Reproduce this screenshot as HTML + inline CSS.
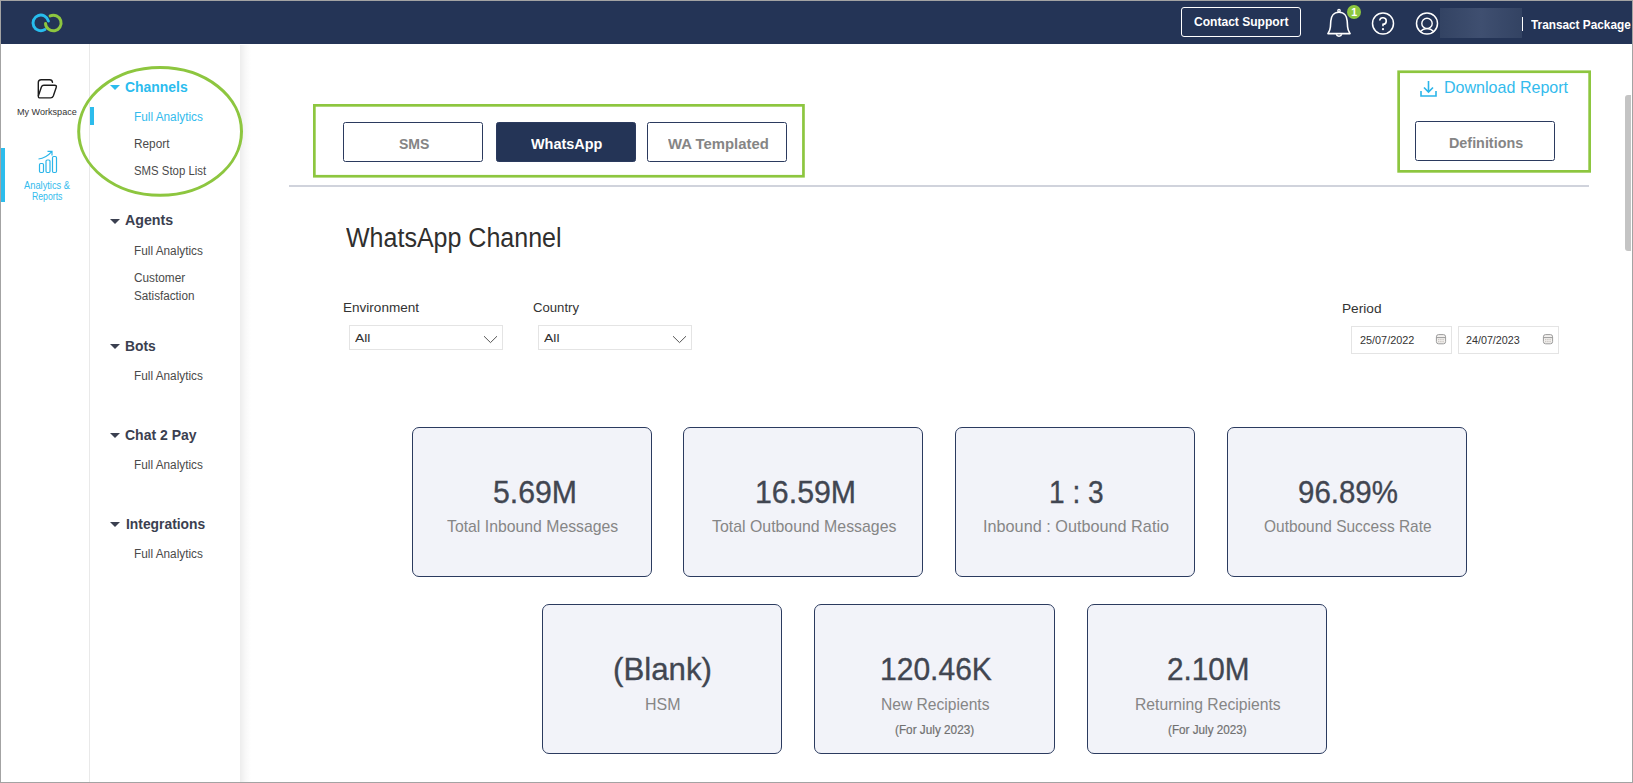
<!DOCTYPE html>
<html>
<head>
<meta charset="utf-8">
<title>Analytics</title>
<style>
*{box-sizing:border-box;margin:0;padding:0}
html,body{width:1633px;height:783px;overflow:hidden;background:#fff}
body{font-family:"Liberation Sans",sans-serif;position:relative;color:#333}
.abs,.t{position:absolute}
.t{white-space:nowrap;transform-origin:0 50%;line-height:1}
#frame{position:absolute;left:0;top:0;width:1633px;height:783px;border:1px solid #a3a3a3;z-index:50;pointer-events:none}
#topbar{position:absolute;left:1px;top:1px;width:1631px;height:43px;background:#243456}
#side1{position:absolute;left:1px;top:44px;width:88px;height:738px;background:#fff}
#div1{position:absolute;left:89px;top:44px;width:1px;height:738px;background:#e9e9e9}
#side2{position:absolute;left:90px;top:44px;width:150px;height:738px;background:#fff}
#shadow{position:absolute;left:240px;top:45px;width:11px;height:737px;background:linear-gradient(to right,#ededed,#f8f8f8 50%,#fff)}
.h{font-weight:bold;font-size:15px;color:#3b4050}
.i{font-size:12px;color:#4a4a4a}
.cy{color:#33bbed}
.cy2{color:#2bbcee}
.tri{position:absolute;width:0;height:0;border-left:5px solid transparent;border-right:5px solid transparent;border-top:5.5px solid #3b4050}
.btn{position:absolute;height:40px;width:140px;border:1px solid #2b3a5e;border-radius:2.5px;background:#fff}
.btn.on{background:#243456}
.card{position:absolute;width:240px;height:150px;background:#f2f3f9;border:1px solid #2b3b5f;border-radius:7px}
.num{font-size:32px;color:#414651;-webkit-text-stroke:0.35px #414651}
.lab{font-size:17px;color:#868686}
.sub{font-size:12.5px;color:#707070;-webkit-text-stroke:0.2px #707070}
.dd{position:absolute;height:25px;width:154px;border:1px solid #e4e4e4;background:#fff}
.date{position:absolute;height:28px;width:101px;border:1px solid #e4e4e4;background:#fff}
</style>
</head>
<body>
<div id="topbar"></div>
<div id="side1"></div>
<div id="div1"></div>
<div id="side2"></div>
<div id="shadow"></div>

<!-- TOPBAR -->
<svg class="abs" style="left:28px;top:10px" width="40" height="26" viewBox="28 10 40 26">
  <path d="M48.37 21.01 A7.8 7.8 0 1 0 44.93 29.51" fill="none" stroke="#27bdee" stroke-width="3" stroke-linecap="round"/>
  <path d="M45.52 23.54 A7.8 7.8 0 1 0 50.13 15.87" fill="none" stroke="#8dc63f" stroke-width="3" stroke-linecap="round"/>
</svg>
<div class="abs" style="left:1181px;top:7px;width:120px;height:30px;border:1px solid #fff;border-radius:3px"></div>
<span class="t" id="cs" style="left:1194.22px;top:15px;font-size:13px;font-weight:bold;color:#fff;transform:scaleX(0.9270)">Contact Support</span>
<svg class="abs" style="left:1322px;top:4px" width="44" height="38" viewBox="1322 4 44 38">
  <path d="M1339 12.3 C1333.5 12.3 1331 16.5 1330.8 21 L1330.4 27 C1330.2 30 1328.9 31.8 1327.9 33.6 L1350.1 33.6 C1349.1 31.8 1347.8 30 1347.6 27 L1347.2 21 C1347 16.5 1344.5 12.3 1339 12.3 Z" fill="none" stroke="#fff" stroke-width="1.6" stroke-linejoin="round"/>
  <circle cx="1339" cy="10.7" r="1.2" fill="none" stroke="#fff" stroke-width="1.3"/>
  <path d="M1336.3 34.3 A2.8 2.6 0 0 0 1341.7 34.3" fill="none" stroke="#fff" stroke-width="1.5"/>
  <circle cx="1354" cy="12" r="7" fill="#8dc63f"/>
</svg>
<span class="t" id="bd" style="left:1351.3px;top:6.5px;font-size:10.5px;font-weight:bold;color:#fff">1</span>
<svg class="abs" style="left:1368px;top:10px" width="74" height="28" viewBox="1368 10 74 28">
  <circle cx="1383" cy="23.5" r="10.5" fill="none" stroke="#fff" stroke-width="1.5"/>
  <path d="M1379.700 20.500 A3.300 3.300 0 1 1 1383 24.300 L1383 26.200" fill="none" stroke="#fff" stroke-width="1.600"/>
  <circle cx="1383" cy="29.200" r="1.100" fill="#fff"/>
  <circle cx="1427" cy="23.5" r="10.5" fill="none" stroke="#fff" stroke-width="1.5"/>
  <circle cx="1427" cy="23.4" r="5.2" fill="none" stroke="#fff" stroke-width="1.4"/>
  <path d="M1419.9 31.7 Q1427 25.2 1434.1 31.7" fill="none" stroke="#fff" stroke-width="1.4"/>
</svg>
<div class="abs" style="left:1440px;top:8px;width:82px;height:30px;background:linear-gradient(to right,#334363,#3f4f70 50%,#334363)"></div>
<div class="abs" style="left:1522px;top:17px;width:1px;height:14px;background:#fff"></div>
<span class="t" id="tp" style="left:1531.02px;top:18px;font-size:13px;font-weight:bold;color:#fff;transform:scaleX(0.9080)">Transact Package</span>

<!-- SIDEBAR 1 -->
<svg class="abs" style="left:34px;top:76px" width="28" height="26" viewBox="34 76 28 26">
  <path d="M38.3 95.5 L38.3 82.6 Q38.3 79.7 41.2 79.7 L49.6 79.7 Q52.2 79.7 52.5 82.4" fill="none" stroke="#1c1c1c" stroke-width="1.4" stroke-linecap="round"/>
  <path d="M43.9 85.2 L54.5 85.2 Q57 85.2 56.2 87.5 L53.3 96 Q52.6 97.9 50.6 97.9 L40.3 97.9 Q37.7 97.9 38.5 95.6 L41.4 87 Q42 85.2 43.9 85.2 Z" fill="none" stroke="#1c1c1c" stroke-width="1.4" stroke-linejoin="round"/>
</svg>
<span class="t" id="mw" style="left:17.04px;top:107px;font-size:9.5px;color:#333;transform:scaleX(0.9542)">My Workspace</span>
<div class="abs" style="left:1px;top:148px;width:4px;height:54px;background:#2dbcec"></div>
<svg class="abs" style="left:34px;top:148px" width="28" height="28" viewBox="34 148 28 28">
  <rect x="39.500" y="163.500" width="4" height="9" rx="1.200" fill="none" stroke="#2bb5e9" stroke-width="1.200"/>
  <rect x="46" y="160" width="4" height="12.500" rx="1.200" fill="none" stroke="#2bb5e9" stroke-width="1.200"/>
  <rect x="52.500" y="156.500" width="4" height="16" rx="1.200" fill="none" stroke="#2bb5e9" stroke-width="1.200"/>
  <path d="M38.500 159 Q46 158 51.500 151.800 M47.500 151.300 L52 151.300 L52 155.500" fill="none" stroke="#2bb5e9" stroke-width="1.200"/>
</svg>
<span class="t cy" id="ar1" style="left:24.47px;top:180.5px;font-size:10.3px;transform:scaleX(0.9039)">Analytics &amp;</span>
<span class="t cy" id="ar2" style="left:32.11px;top:191.5px;font-size:10.3px;transform:scaleX(0.8451)">Reports</span>

<!-- SIDEBAR 2 -->
<svg class="abs" style="left:70px;top:60px" width="180" height="142" viewBox="70 60 180 142">
  <ellipse cx="160.1" cy="131.4" rx="81.4" ry="63.9" fill="none" stroke="#8dc63f" stroke-width="3"/>
</svg>
<div class="abs" style="left:90px;top:107px;width:4px;height:18px;background:#2dbcec"></div>
<div class="tri" style="left:110px;top:85px;border-top-color:#2bbcee"></div>
<span id="ch" class="t h cy2" style="left:125.36px;top:79px;transform:scaleX(0.9277)">Channels</span>
<span id="fa1" class="t i cy" style="left:133.91px;top:111px;transform:scaleX(0.9842)">Full Analytics</span>
<span id="rp" class="t i" style="left:133.88px;top:138px;transform:scaleX(0.9833)">Report</span>
<span id="ssl" class="t i" style="left:134.27px;top:165px;transform:scaleX(0.9485)">SMS Stop List</span>

<div class="tri" style="left:110px;top:219px"></div>
<span id="ag" class="t h" style="left:124.79px;top:212.3px;transform:scaleX(0.9482)">Agents</span>
<span id="fa2" class="t i" style="left:133.91px;top:245px;transform:scaleX(0.9842)">Full Analytics</span>
<span id="cu" class="t i" style="left:133.95px;top:272px;transform:scaleX(0.9843)">Customer</span>
<span id="sa" class="t i" style="left:133.70px;top:290px;transform:scaleX(0.9746)">Satisfaction</span>

<div class="tri" style="left:110px;top:344px"></div>
<span id="bo" class="t h" style="left:125.32px;top:338px;transform:scaleX(0.9225)">Bots</span>
<span id="fa3" class="t i" style="left:133.91px;top:370px;transform:scaleX(0.9842)">Full Analytics</span>

<div class="tri" style="left:110px;top:433px"></div>
<span id="c2p" class="t h" style="left:125.34px;top:427px;transform:scaleX(0.9338)">Chat 2 Pay</span>
<span id="fa4" class="t i" style="left:133.91px;top:459px;transform:scaleX(0.9842)">Full Analytics</span>

<div class="tri" style="left:110px;top:522px"></div>
<span id="ig" class="t h" style="left:125.81px;top:516px;transform:scaleX(0.9227)">Integrations</span>
<span id="fa5" class="t i" style="left:133.91px;top:548px;transform:scaleX(0.9842)">Full Analytics</span>

<!-- MAIN -->
<svg class="abs" style="left:300px;top:95px" width="520" height="95" viewBox="300 95 520 95"><rect x="314.35" y="105.35" width="489.1" height="70.9" fill="none" stroke="#8dc63f" stroke-width="2.7"/></svg>
<div class="btn" style="left:343px;top:122px"></div>
<div class="btn on" style="left:496px;top:122px"></div>
<div class="btn" style="left:647px;top:122px"></div>
<span class="t" id="b1" style="left:398.61px;top:136px;font-size:15px;font-weight:bold;color:#858585;transform:scaleX(0.9367)">SMS</span>
<span class="t" id="b2" style="left:531.45px;top:136px;font-size:15px;font-weight:bold;color:#fff;transform:scaleX(0.9622)">WhatsApp</span>
<span class="t" id="b3" style="left:667.90px;top:136px;font-size:15px;font-weight:bold;color:#858585;transform:scaleX(0.9909)">WA Templated</span>
<div class="abs" style="left:289px;top:185px;width:1300px;height:2px;background:#d0d3dc"></div>

<svg class="abs" style="left:1390px;top:60px" width="210" height="120" viewBox="1390 60 210 120"><rect x="1398.65" y="71.75" width="191" height="99.6" fill="none" stroke="#8dc63f" stroke-width="2.7"/></svg>
<svg class="abs" style="left:1418px;top:78px" width="22" height="22" viewBox="1418 78 22 22">
  <path d="M1428.500 81 L1428.500 92 M1424 87.500 L1428.500 92 L1433 87.500" fill="none" stroke="#2bb5e9" stroke-width="1.600"/>
  <path d="M1421 91 L1421 96 L1436 96 L1436 91" fill="none" stroke="#2bb5e9" stroke-width="1.600"/>
</svg>
<span class="t cy" id="dr" style="left:1443.91px;top:79px;font-size:17px;transform:scaleX(0.9446)">Download Report</span>
<div class="btn" style="left:1415px;top:121px"></div>
<span class="t" id="b4" style="left:1448.83px;top:135px;font-size:15px;font-weight:bold;color:#858585;transform:scaleX(0.9568)">Definitions</span>

<span class="t" id="title" style="left:346.12px;top:225px;font-size:27px;color:#302f2e;transform:scaleX(0.9264)">WhatsApp Channel</span>

<span class="t" id="l1" style="left:342.99px;top:301px;font-size:13px;color:#333;transform:scaleX(1.0424)">Environment</span>
<div class="dd" style="left:349px;top:325px"></div>
<span id="all1" class="t" style="left:354.85px;top:333px;font-size:11px;color:#333;transform:scaleX(1.2637)">All</span>
<span class="t" id="l2" style="left:533.11px;top:301px;font-size:13px;color:#333;transform:scaleX(1.0108)">Country</span>
<div class="dd" style="left:538px;top:325px"></div>
<span id="all2" class="t" style="left:543.70px;top:333px;font-size:11px;color:#333;transform:scaleX(1.2716)">All</span>
<svg class="abs" style="left:480px;top:330px" width="220" height="16" viewBox="480 330 220 16">
  <path d="M484 336.2 L490.5 342.6 L497 336.2" fill="none" stroke="#555" stroke-width="1"/>
  <path d="M673 336.2 L679.5 342.6 L686 336.2" fill="none" stroke="#555" stroke-width="1"/>
</svg>
<span class="t" id="l3" style="left:1342.23px;top:302px;font-size:13px;color:#333;transform:scaleX(1.0510)">Period</span>
<div class="date" style="left:1351px;top:326px"></div>
<div class="date" style="left:1458px;top:326px"></div>
<span class="t" id="d1" style="left:1360.17px;top:335px;font-size:11px;color:#333;transform:scaleX(0.9863)">25/07/2022</span>
<span class="t" id="d2" style="left:1466.39px;top:335px;font-size:11px;color:#333;transform:scaleX(0.9757)">24/07/2023</span>
<svg class="abs" style="left:1434px;top:332px" width="124" height="14" viewBox="1434 332 124 14">
  <g fill="none"><rect x="1436.4" y="334.6" width="9.2" height="9.2" rx="2.2" fill="#f3f1ef" stroke="#9b9b9b" stroke-width="1"/><path d="M1436.4 337.6 H1445.6" stroke="#9b9b9b" stroke-width="1"/><path d="M1438.0 339.7 H1444.2 M1438.0 341.7 H1444.2" stroke="#b9b2ac" stroke-width="0.8" stroke-dasharray="1.4 0.8"/><rect x="1543.4" y="334.6" width="9.2" height="9.2" rx="2.2" fill="#f3f1ef" stroke="#9b9b9b" stroke-width="1"/><path d="M1543.4 337.6 H1552.6" stroke="#9b9b9b" stroke-width="1"/><path d="M1545.0 339.7 H1551.2 M1545.0 341.7 H1551.2" stroke="#b9b2ac" stroke-width="0.8" stroke-dasharray="1.4 0.8"/></g>
</svg>

<!-- CARDS -->
<div class="card" style="left:412px;top:427px"></div>
<div class="card" style="left:683px;top:427px"></div>
<div class="card" style="left:955px;top:427px"></div>
<div class="card" style="left:1227px;top:427px"></div>
<div class="card" style="left:542px;top:604px"></div>
<div class="card" style="left:814px;top:604px;width:241px"></div>
<div class="card" style="left:1087px;top:604px"></div>

<span class="t num" id="n1" style="left:492.55px;top:476px;transform:scaleX(0.9450)">5.69M</span>
<span class="t lab" id="c1" style="left:447.31px;top:518px;transform:scaleX(0.9290)">Total Inbound Messages</span>
<span class="t num" id="n2" style="left:754.52px;top:476px;transform:scaleX(0.9471)">16.59M</span>
<span class="t lab" id="c2" style="left:712.03px;top:518px;transform:scaleX(0.9339)">Total Outbound Messages</span>
<span class="t num" id="n3" style="left:1049.30px;top:476px;transform:scaleX(0.8761)">1 : 3</span>
<span class="t lab" id="c3" style="left:982.92px;top:518px;transform:scaleX(0.9555)">Inbound : Outbound Ratio</span>
<span class="t num" id="n4" style="left:1297.83px;top:476px;transform:scaleX(0.9209)">96.89%</span>
<span class="t lab" id="c4" style="left:1264.48px;top:518px;transform:scaleX(0.9095)">Outbound Success Rate</span>

<span class="t num" id="n5" style="left:613.48px;top:652.5px;transform:scaleX(0.9761)">(Blank)</span>
<span class="t lab" id="c5" style="left:644.88px;top:696px;transform:scaleX(0.9398)">HSM</span>
<span class="t num" id="n6" style="left:880.11px;top:652.5px;transform:scaleX(0.9382)">120.46K</span>
<span class="t lab" id="c6" style="left:881.12px;top:696px;transform:scaleX(0.9185)">New Recipients</span>
<span class="t sub" id="s6" style="left:895.24px;top:723.5px;transform:scaleX(0.9417)">(For July 2023)</span>
<span class="t num" id="n7" style="left:1166.95px;top:652.5px;transform:scaleX(0.9288)">2.10M</span>
<span class="t lab" id="c7" style="left:1135.00px;top:696px;transform:scaleX(0.9225)">Returning Recipients</span>
<span class="t sub" id="s7" style="left:1168.11px;top:723.5px;transform:scaleX(0.9369)">(For July 2023)</span>

<!-- scrollbar -->
<div class="abs" style="left:1625px;top:95px;width:6px;height:156px;background:#c4c4c4;border-radius:3px 0 0 3px"></div>
<div id="frame"></div>
</body>
</html>
